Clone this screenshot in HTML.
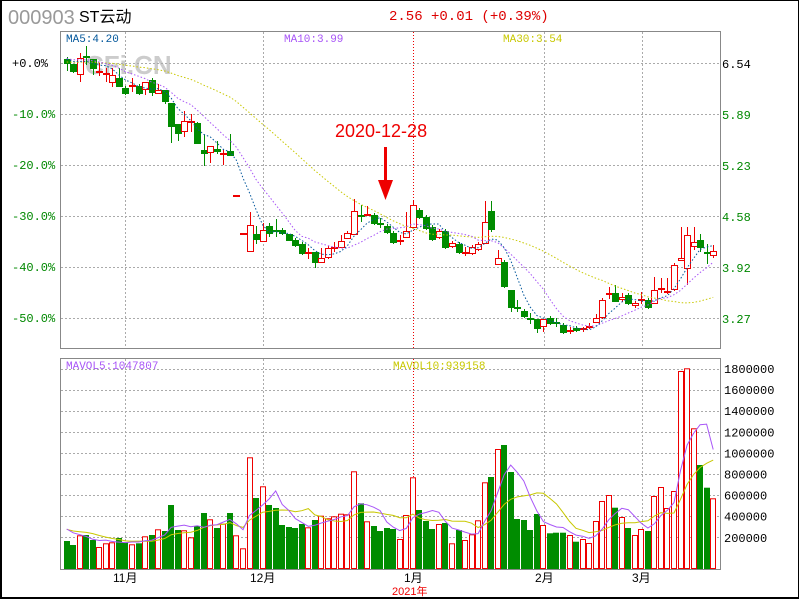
<!DOCTYPE html>
<html><head><meta charset="utf-8"><style>
html,body{margin:0;padding:0;background:#fff}
#w{position:relative;width:796px;height:596px;border:2px solid #000;border-top-width:1px;border-right-width:1px;overflow:hidden;font-family:"Liberation Mono","Noto Sans CJK SC",monospace}
svg{position:absolute;left:-2px;top:-1px}
</style></head><body><div id="w"><svg id="s" width="800" height="600" xmlns="http://www.w3.org/2000/svg" font-family="Liberation Mono, Noto Sans CJK SC, monospace">
<text x="8" y="24" font-family="Liberation Sans, sans-serif" font-size="20" fill="#999">000903</text>
<text x="79" y="22" font-family="Liberation Sans, Noto Sans CJK SC, sans-serif" font-size="16" fill="#000">ST云动</text>
<text x="389" y="20" font-size="14" fill="#d00">2.56 +0.01 (+0.39%)</text>
<text x="85" y="74" font-family="Liberation Sans, sans-serif" font-weight="bold" font-size="26" fill="#ccc">CFi.CN</text>
<g id="grid"></g>
<rect x="60.5" y="31.5" width="660" height="317" fill="none" stroke="#888"/>
<rect x="60.5" y="358.5" width="660" height="211" fill="none" stroke="#888"/>
<g id="c"></g>
<text x="66" y="42" font-size="11" fill="#03579b">MA5:4.20</text>
<text x="284" y="42" font-size="11" fill="#a855f7">MA10:3.99</text>
<text x="503" y="42" font-size="11" fill="#c8c800">MA30:3.54</text>
<text x="66" y="369" font-size="11" fill="#a855f7">MAVOL5:1047807</text>
<text x="393" y="369" font-size="11" fill="#c8c800">MAVOL10:939158</text>
<g font-size="12">
<text x="12" y="67" fill="#000">+0.0%</text>
<text x="12" y="118" fill="#080">-10.0%</text>
<text x="12" y="169" fill="#080">-20.0%</text>
<text x="12" y="220" fill="#080">-30.0%</text>
<text x="12" y="271" fill="#080">-40.0%</text>
<text x="12" y="322" fill="#080">-50.0%</text>
<text x="722" y="68" fill="#000">6.54</text>
<text x="722" y="119" fill="#080">5.89</text>
<text x="722" y="170" fill="#080">5.23</text>
<text x="722" y="221" fill="#080">4.58</text>
<text x="722" y="272" fill="#080">3.92</text>
<text x="722" y="323" fill="#080">3.27</text>
</g>
<g font-size="12" fill="#000" id="vl"></g>
<g font-family="Liberation Sans, Noto Sans CJK SC, sans-serif" font-size="12" fill="#000">
<text x="113" y="582">11月</text><text x="250" y="582">12月</text><text x="404" y="582">1月</text><text x="535" y="582">2月</text><text x="632" y="582">3月</text>
<text x="392" y="595" fill="#e00" font-size="11">2021年</text>
</g>
<text x="335" y="137" font-family="Liberation Sans, sans-serif" font-size="18" fill="#e00">2020-12-28</text>
<rect x="384" y="147" width="3" height="36" fill="#e00"/>
<polygon points="378,180 393,180 385.5,200" fill="#e00"/>
</svg></div>
<script>
var S='http://www.w3.org/2000/svg';
function el(p,t,a){var e=document.createElementNS(S,t);for(var k in a)e.setAttribute(k,a[k]);p.appendChild(e);return e;}
var g=document.getElementById('grid'),c=document.getElementById('c'),vl=document.getElementById('vl');
[63,114,165,216,267,318].forEach(function(y){el(g,'line',{x1:61,x2:720,y1:y+.5,y2:y+.5,stroke:'#aaa','stroke-dasharray':'2 2'});});
[369,390,411,432,453,474,495,516,537].forEach(function(y){el(g,'line',{x1:61,x2:720,y1:y+.5,y2:y+.5,stroke:'#aaa','stroke-dasharray':'2 2'});});
[125,263,544,642].forEach(function(x){el(g,'line',{x1:x+.5,x2:x+.5,y1:32,y2:348,stroke:'#aaa','stroke-dasharray':'2 2'});el(g,'line',{x1:x+.5,x2:x+.5,y1:359,y2:569,stroke:'#aaa','stroke-dasharray':'2 2'});});
el(g,'line',{x1:413.5,x2:413.5,y1:32,y2:348,stroke:'#e00','stroke-dasharray':'1 2'});
el(g,'line',{x1:413.5,x2:413.5,y1:359,y2:569,stroke:'#e00','stroke-dasharray':'1 2'});
['1800000','1600000','1400000','1200000','1000000','800000','600000','400000','200000'].forEach(function(t,i){el(vl,'text',{x:724,y:373+i*21.1}).textContent=t;});
var C=[['g',59,63,57,71],['g',64,71,64,73],['r',58,74,53,82],['g',56.7,56.7,46,65],['g',59,68,59,75],['r',71.7,71.7,63,76],['r',74.3,74.3,68,82],['r',75,82,68,87],['g',78,86,68,87],['g',88,93],
['r',86,86,78,92],['g',86,93],['r',82,89,82,95],['g',80,92,78,96],['r',90,93,84,93],['g',90,101,90,104],['g',103,126,103,143],['g',124,133,124,141],['r',121,131,111,137],['r',122,122,114,132],
['g',123,143,122,143],['g',150,153,135,166],['r',146,152,146,163],['g',149,151,141,154],['r',154,154,149,165],['g',151,155,134,155],['r',196,196,196,196],['r',234,234,234,234],['r',225,251,212,251],['g',234,239,226,244],
['r',230,241,223,241],['g',226,233,223,237],['g',231,231,219,237],['g',230,233],['g',234,240,234,241],['g',240,245],['g',244,253],['r',253,253,248,259],['g',252,262,252,268],['r',258,262,248,262],
['r',248,257],['r',248,248,242,252],['r',241,247,235,247],['r',233,238,231,238],['r',211,234,199,234],['g',216,216,205,222],['r',214.7,214.7,206,215],['g',215,223],['g',224,224,218,228],['g',226,232],
['g',233,242],['r',241,241,235,245],['r',231,237,212,237],['r',205,227,200,227],['g',210,217],['g',217,228],['g',227,239],['r',231,237],['g',231,247],['r',243,246],
['g',244,252],['r',253,253,247,256],['r',247,253],['r',244,249],['r',222,243,201,243],['g',211,229,201,232],['r',258,264,250,264],['g',262,286],['g',290,307,290,312],['g',308,308,300,312],
['g',311,316],['g',319,319,313,324],['g',319,328,319,333],['r',319,326,319,332],['g',318,323],['g',323,323,318,327],['g',325,332],['r',331,331,327,334],['g',328,330],['r',329,330],
['r',327,327,323,329],['r',318,322,314,322],['r',300,317],['r',294,294,287,299],['g',293,301,285,301],['r',297,299,293,302],['g',295,303],['r',303,305,301,308],['r',300,300,292,304],['g',300,307],
['r',290,303,277,303],['r',289,289,278,293],['r',292,292,278,294],['r',265,289],['r',258,260,227,260],['r',235,268,227,285],['r',242,246,227,250],['g',240,247,234,252],['g',253,253,244,264],['r',251,255,245,258]];
var V=[541,545,535.3,535,540,547,543.3,542.3,538,542.3,544.3,543.3,536.3,535,529.3,531,505,530,530.3,537.3,526,513,519.3,528,523.7,513,535.3,548.3,457.3,498,486.3,505,508,525,527,528,524,527.3,520,515.7,518.3,516.3,513.7,514.3,471.3,503.3,521.3,526,531,528,529,
539,515,477.3,510,521,529,524,523,543.3,530,540,534.3,520.3,482.3,477,449,445,472,519,520,530,514,525,533.3,532.7,532.7,535,541.7,539,543,521,501,495,507.7,517,528,535,529,531,496,487,508,491,371,368.3,428.3,465,487.7,498.3];
var R='#e00',G='#008c00';
function X(i){return 66.7+6.53*i;}
V.forEach(function(t,i){var x=Math.round(X(i))-3,col=C[i][0]=='r';
 if(col)el(c,'rect',{x:x+.5,y:t+.5,width:5,height:568-t,fill:'#fff',stroke:R});
 else el(c,'rect',{x:x,y:t,width:6,height:569-t,fill:G});});
function maLine(arr,n,pad,col,dash){var pts=[];for(var i=0;i<arr.length;i++){var s=0;for(var k=0;k<n;k++){var j=i-k;s+=j>=0?arr[j]:pad;}pts.push(X(i).toFixed(1)+','+(s/n).toFixed(1));}
 var a={points:pts.join(' '),fill:'none',stroke:col,'stroke-width':1};if(dash)a['stroke-dasharray']=dash;el(c,'polyline',a);}
maLine(V,10,528,'#c8c800');maLine(V,5,526,'#a855f7');
C.forEach(function(d,i){var x=Math.round(X(i)),r=d[0]=='r',col=r?R:G,t=d[1],b=d[2],h=d[3]!=null?d[3]:t-2,l=d[4]!=null?d[4]:b+2;
 if(h<t)el(c,'line',{x1:x+.5,x2:x+.5,y1:h,y2:t,stroke:col});
 if(l>b)el(c,'line',{x1:x+.5,x2:x+.5,y1:b,y2:l,stroke:col});
 if(b-t<1.5){el(c,'rect',{x:x-3,y:Math.round(t)-1,width:7,height:2,fill:col});}
 else if(r)el(c,'rect',{x:x-2.5,y:Math.round(t)+.5,width:6,height:Math.round(b-t),fill:'#fff',stroke:col});
 else el(c,'rect',{x:x-3,y:Math.round(t),width:7,height:Math.round(b-t)+1,fill:col});});
var cl=C.map(function(d){return d[0]=='r'?d[1]:d[2];});
maLine(cl,30,62,'#c8c800','1.5 2');maLine(cl,10,58,'#a855f7','1.5 2');maLine(cl,5,58,'#03579b','1.5 2');
</script></body></html>
